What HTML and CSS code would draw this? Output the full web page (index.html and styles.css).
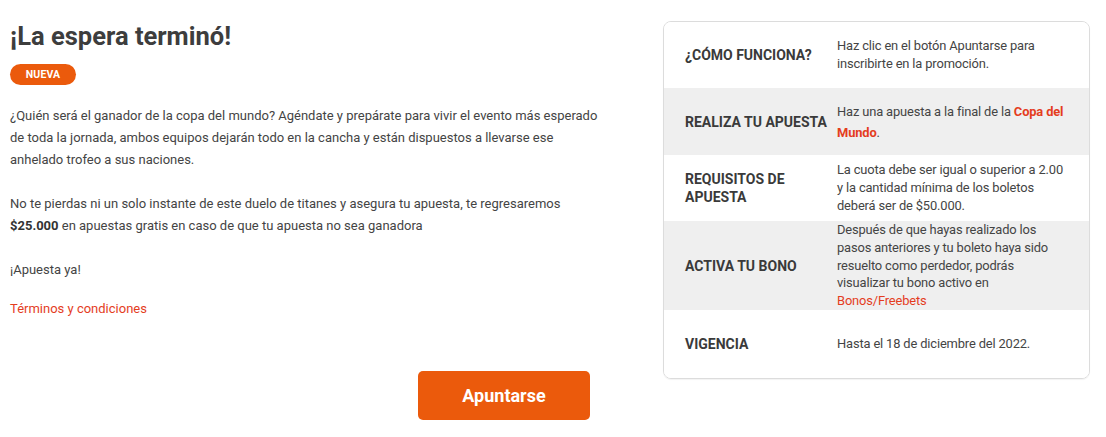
FILE: index.html
```html
<!DOCTYPE html>
<html lang="es">
<head>
<meta charset="utf-8">
<title>¡La espera terminó!</title>
<link rel="stylesheet" href="styles.css">
</head>
<body>
<div class="page">
  <main class="main">
    <h1 class="title">¡La espera terminó!</h1>
    <span class="badge">NUEVA</span>
    <p class="text">¿Quién será el ganador de la copa del mundo? Agéndate y prepárate para vivir el evento más esperado de toda la jornada, ambos equipos dejarán todo en la cancha y están dispuestos a llevarse ese anhelado trofeo a sus naciones.<br><br>No te pierdas ni un solo instante de este duelo de titanes y asegura tu apuesta, te regresaremos <strong>$25.000</strong> en apuestas gratis en caso de que tu apuesta no sea ganadora<br><br>¡Apuesta ya!</p>
    <a class="terms" href="#">Términos y condiciones</a>
    <button class="cta" type="button">Apuntarse</button>
  </main>
  <aside class="card">
    <div class="row">
      <div class="label">¿CÓMO FUNCIONA?</div>
      <div class="value">Haz clic en el botón Apuntarse para inscribirte en la promoción.</div>
    </div>
    <div class="row alt">
      <div class="label">REALIZA TU APUESTA</div>
      <div class="value tall">Haz una apuesta a la final de la <strong class="hl">Copa del Mundo</strong>.</div>
    </div>
    <div class="row">
      <div class="label">REQUISITOS DE APUESTA</div>
      <div class="value">La cuota debe ser igual o superior a 2.00 y la cantidad mínima de los boletos deberá ser de $50.000.</div>
    </div>
    <div class="row alt big">
      <div class="label">ACTIVA TU BONO</div>
      <div class="value">Después de que hayas realizado los pasos anteriores y tu boleto haya sido resuelto como perdedor, podrás visualizar tu bono activo en <a class="link" href="#">Bonos/Freebets</a></div>
    </div>
    <div class="row last">
      <div class="label">VIGENCIA</div>
      <div class="value">Hasta el 18 de diciembre del 2022.</div>
    </div>
  </aside>
</div>
</body>
</html>
```

FILE: styles.css
```css
* { box-sizing: border-box; }
html, body { margin: 0; padding: 0; background: #fff; }
body {
  font-family: Roboto, "Liberation Sans", Arial, sans-serif;
  color: #444;
}
.page {
  display: flex;
  align-items: flex-start;
  padding: 21px 16px 0 10px;
}
.main {
  width: 588px;
  display: flex;
  flex-direction: column;
  align-items: flex-start;
}
.title {
  margin: 0;
  font-size: 25.5px;
  line-height: 30px;
  font-weight: 700;
  color: #3d3d3d;
}
.badge {
  margin-top: 13px;
  display: inline-flex;
  align-items: center;
  justify-content: center;
  width: 66px;
  height: 21px;
  border-radius: 11px;
  background: #eb5a0c;
  color: #fff;
  font-size: 10.5px;
  font-weight: 700;
  letter-spacing: 0.1px;
}
.text {
  margin: 20px 0 0;
  font-size: 13px;
  line-height: 22px;
  color: #444;
}
.text strong { color: #333; font-weight: 700; }
.terms {
  margin-top: 17px;
  font-size: 13px;
  line-height: 22px;
  color: #e43d1e;
  text-decoration: none;
}
.cta {
  margin: 51px 0 0 408px;
  width: 172px;
  height: 49px;
  border: 0;
  border-radius: 5px;
  background: #eb5a0c;
  color: #fff;
  font-family: Roboto, "Liberation Sans", Arial, sans-serif;
  font-size: 18px;
  font-weight: 700;
  cursor: pointer;
}
.card {
  margin-left: 65px;
  width: 427px;
  border: 1px solid #dcdcdc;
  border-radius: 8px;
  overflow: hidden;
  box-shadow: 0 1px 1px rgba(0,0,0,0.05);
}
.row {
  display: flex;
  align-items: center;
  min-height: 66px;
  padding: 0 23px 0 21px;
  background: #fff;
}
.row.alt { background: #efefef; min-height: 67px; }
.row.big { min-height: 89px; }
.row.last { min-height: 68px; }
.label {
  flex: 0 0 152px;
  padding-right: 4px;
  font-size: 14px;
  line-height: 18px;
  font-weight: 700;
  color: #3a3a3a;
}
.value {
  flex: 1;
  font-size: 12.9px;
  letter-spacing: -0.15px;
  line-height: 17.7px;
  color: #444;
}
.value.tall { line-height: 21px; }
.hl { color: #e43d1e; font-weight: 700; }
.link { color: #e43d1e; text-decoration: none; }
```
